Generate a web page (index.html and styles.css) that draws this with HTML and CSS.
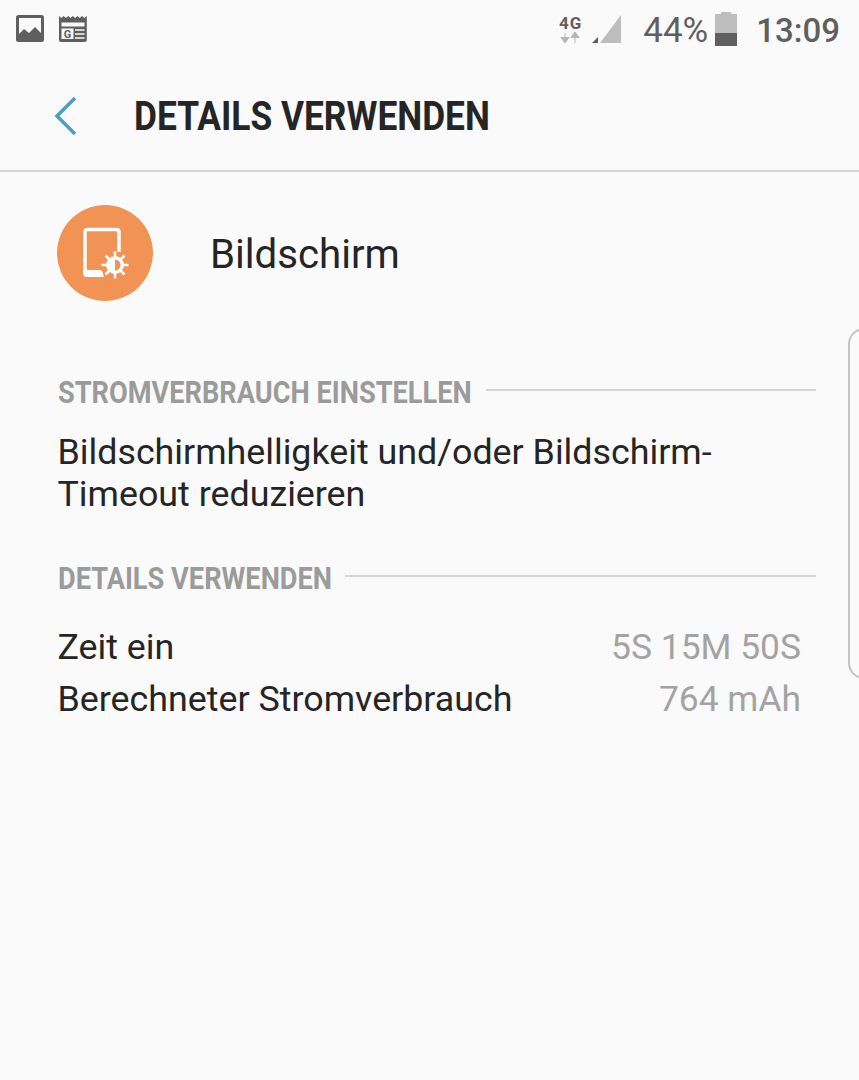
FILE: index.html
```html
<!DOCTYPE html>
<html lang="de">
<head>
  <meta charset="UTF-8">
  <meta name="viewport" content="width=device-width, initial-scale=1.0">
  <title>Details verwenden</title>
  <link rel="stylesheet" href="styles.css">
</head>
<body>
  <div class="status-bar">
    <div class="status-left">
      <svg class="status-icon" width="28" height="27" viewBox="0 0 28 27">
        <rect x="0" y="0" width="28" height="27" rx="2.500" fill="#5f5f5f"/>
        <path d="M3 3h22v15l-6-6-6 6-5-4-5 5z" fill="#fafafa"/>
      </svg>
      <svg class="status-icon" width="28" height="27" viewBox="0 0 28 27">
        <path d="M0 1l2.300 2 2.300-2 2.300 2 2.300-2 2.300 2 2.300-2 2.300 2 2.300-2 2.300 2 2.300-2 2.300 2 2.500-2v24q0 2-2 2H2q-2 0-2-2z" fill="#5f5f5f"/>
        <rect x="2.500" y="7.500" width="23" height="4" fill="#fafafa"/>
        <rect x="2.500" y="13.500" width="12" height="10.500" fill="#fafafa"/>
        <path d="M16 15h9.500M16 19h9.500M16 23h9.500" stroke="#fafafa" stroke-width="1.600"/>
        <text x="8.500" y="23" class="g-letter">G</text>
      </svg>
    </div>
    <div class="status-right">
      <div class="net-type">
        <span class="net-label">4G</span>
        <svg width="21" height="11" viewBox="0 0 21 11">
          <path d="M5 1v5M1 5.500h8L5 11zM15 11V5M11 5.500h8L15 0z" fill="#b5b5b5" stroke="#b5b5b5"/>
        </svg>
      </div>
      <svg class="signal" width="30" height="30" viewBox="0 0 30 30">
        <path d="M8 29L29 1v28z" fill="#bdbdbd"/>
        <path d="M0 29l6-6v6z" fill="#5f5f5f"/>
      </svg>
      <span class="battery-pct">44%</span>
      <svg class="battery" width="22" height="34" viewBox="0 0 22 34">
        <path d="M6 0h10v2h6v19H0V2h6z" fill="#bdbdbd"/>
        <rect x="0" y="21" width="22" height="13" fill="#5f5f5f"/>
      </svg>
      <span class="clock">13:09</span>
    </div>
  </div>

  <div class="header">
    <svg class="back" width="26" height="40" viewBox="0 0 26 40">
      <path d="M23 2L5 20l18 18" fill="none" stroke="#4a9fc2" stroke-width="3.500"/>
    </svg>
    <h1 class="title">DETAILS VERWENDEN</h1>
  </div>

  <div class="app-row">
    <div class="app-icon">
      <svg width="58" height="58" viewBox="0 0 58 58">
        <path d="M9 46V8q0-2.500 2.500-2.500h29q2.500 0 2.500 2.500v20" fill="none" stroke="#fff" stroke-width="3.500"/>
        <path d="M7 45h1q2 1 6 1h10q2 0 2.500 2l1.500 5H11q-4 0-4-4z" fill="#fff"/>
        <path d="M39 27.500v27M25.500 41h27M29.500 31.500l19 19M48.500 31.500l-19 19" stroke="#fff" stroke-width="2.500"/>
        <circle cx="39" cy="41" r="9" fill="#fff"/>
        <path d="M39 35.500a5.500 5.500 0 0 1 0 11z" fill="#f09354"/>
      </svg>
    </div>
    <div class="app-name">Bildschirm</div>
  </div>

  <div class="section-head first">
    <span class="section-label">STROMVERBRAUCH EINSTELLEN</span>
    <span class="section-line"></span>
  </div>
  <p class="tip">Bildschirmhelligkeit und/oder Bildschirm-<br>Timeout reduzieren</p>

  <div class="section-head second">
    <span class="section-label">DETAILS VERWENDEN</span>
    <span class="section-line"></span>
  </div>
  <div class="usage">
    <div class="usage-row">
      <span>Zeit ein</span>
      <span class="usage-value">5S 15M 50S</span>
    </div>
    <div class="usage-row">
      <span>Berechneter Stromverbrauch</span>
      <span class="usage-value">764 mAh</span>
    </div>
  </div>

  <div class="edge-handle"></div>
</body>
</html>
```

FILE: styles.css
```css
html, body {
  height: 100%;
}
body {
  font-family: Roboto, 'Noto Sans', sans-serif;
  background-color: #fafafa;
  color: #252525;
  margin: 0;
  overflow: hidden;
  position: relative;
}
.status-bar {
  height: 60px;
  display: flex;
  justify-content: space-between;
  align-items: center;
  padding: 0 19px 0 16px;
  box-sizing: border-box;
}
.status-left {
  display: flex;
  gap: 15px;
  align-items: center;
  margin-top: -3px;
}
.g-letter {
  font-family: Roboto, sans-serif;
  font-size: 11px;
  font-weight: 700;
  fill: #5f5f5f;
  text-anchor: middle;
}
.status-right {
  display: flex;
  align-items: center;
  color: #5f5f5f;
}
.net-type {
  display: flex;
  flex-direction: column;
  align-items: center;
  width: 25px;
  margin-top: -3px;
}
.net-label {
  font-size: 17px;
  font-weight: 700;
  line-height: 18px;
  letter-spacing: 1px;
}
.signal {
  margin-left: 9px;
  margin-top: -2px;
}
.battery-pct {
  font-size: 35px;
  margin-left: 21px;
}
.battery {
  margin-left: 7px;
  margin-top: -3px;
}
.clock {
  font-size: 33px;
  font-weight: 500;
  margin-left: 19px;
}
.header {
  height: 110px;
  display: flex;
  align-items: center;
  border-bottom: 2px solid #d6d6d6;
  padding-left: 52px;
}
.back {
  margin-right: 56px;
  margin-top: 1px;
}
.title {
  font-size: 40px;
  font-weight: 700;
  margin: 3px 0 0;
  transform: scaleX(0.883);
  transform-origin: left center;
  white-space: nowrap;
}
.app-row {
  display: flex;
  align-items: center;
  padding: 33px 0 0 57px;
}
.app-icon {
  width: 96px;
  height: 96px;
  border-radius: 50%;
  background-color: #f09354;
  display: flex;
  align-items: center;
  justify-content: center;
}
.app-name {
  font-size: 40.2px;
  margin: 3px 0 0 57px;
}
.section-head {
  display: flex;
  align-items: center;
  margin: 0 43px 0 57.5px;
  gap: 15px;
}
.section-head.first {
  margin-top: 73px;
}
.section-head.second {
  margin-top: 45px;
}
.section-label {
  font-size: 31px;
  font-weight: 700;
  color: #9b9b9b;
  white-space: nowrap;
  transform: scaleX(0.877);
  transform-origin: left center;
}
/* the label keeps its unscaled box in flex, pull the line back */
.first .section-label {
  margin-right: -58px;
}
.second .section-label {
  margin-right: -40px;
}
.section-line {
  flex: 1;
  height: 2px;
  background-color: #d6d6d6;
  margin-top: -5px;
}
.tip {
  font-size: 35.8px;
  line-height: 42px;
  margin: 20px 40px 0 57.5px;
}
.usage {
  margin: 24px 58px 0 57.5px;
}
.usage-row {
  display: flex;
  justify-content: space-between;
  font-size: 35.8px;
  line-height: 52px;
}
.usage-value {
  color: #a3a3a3;
  font-size: 35.4px;
}
.edge-handle {
  position: absolute;
  top: 328px;
  right: -23px;
  width: 30px;
  height: 347px;
  border: 2px solid #c4c4c4;
  border-radius: 16px;
}
```
